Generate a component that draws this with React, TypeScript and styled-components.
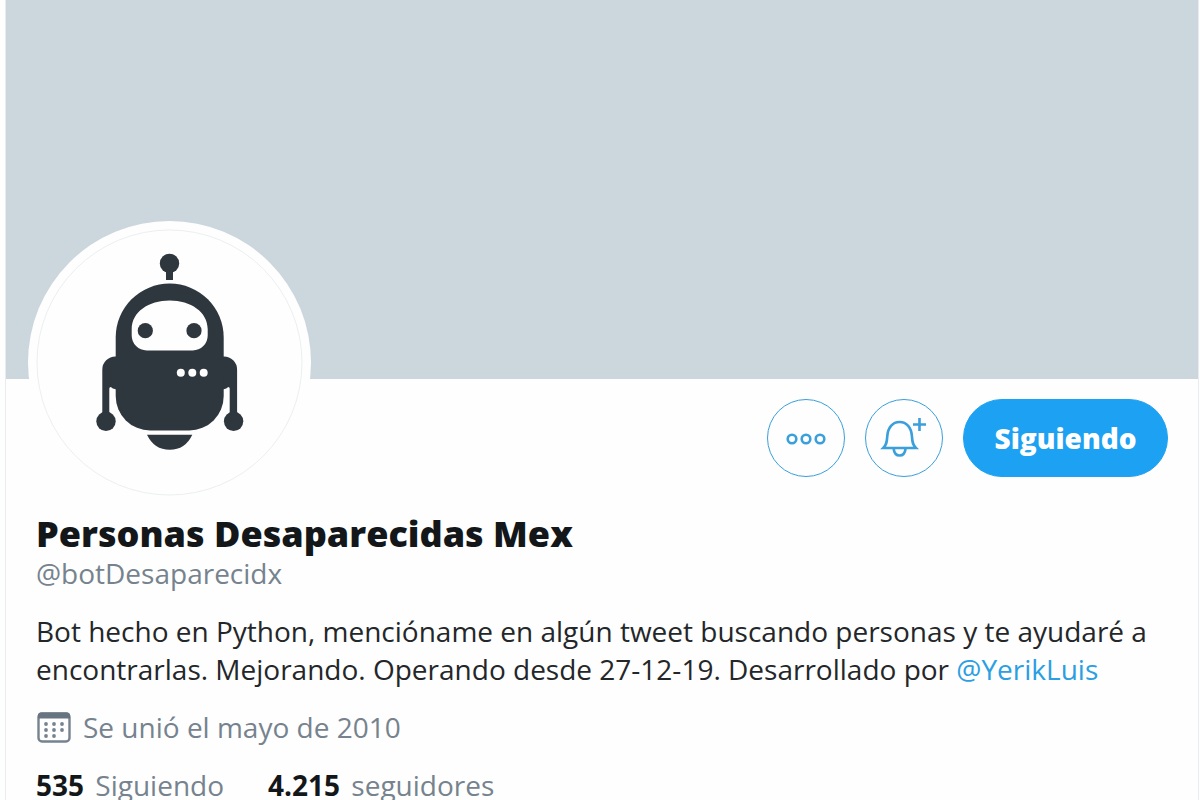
import React from "react";
import styled, { createGlobalStyle } from "styled-components";

const GlobalStyle = createGlobalStyle`
  html { scrollbar-width: none; }
  body {
    margin: 0;
    background: #fefefe;
    color: #14171a;
    font-family: "Open Sans", "Noto Sans", sans-serif;
    font-size: 28px;
    line-height: 38px;
  }
  *, *::before, *::after { box-sizing: border-box; }
`;

const Column = styled.main`
  min-height: 100vh;
  margin: 0 1px 0 5px;
  border-left: 1px solid #e6ecf0;
  border-right: 1px solid #e6ecf0;
`;

const Banner = styled.div`
  height: 379px;
  background: #ccd6dd;
`;

const Header = styled.header`
  display: flex;
  justify-content: space-between;
  align-items: flex-start;
  padding: 0 30px 0 22px;
`;

const Avatar = styled.a`
  display: block;
  width: 283px;
  height: 283px;
  margin-top: -158px;
  padding: 8px;
  border-radius: 50%;
  background: #fefefe;
`;

const Robot = styled.svg`
  display: block;
  width: 100%;
  height: 100%;
`;

const Actions = styled.div`
  display: flex;
  gap: 20px;
  padding-top: 20px;
`;

const Button = styled.button<{ $filled?: boolean }>`
  display: flex;
  align-items: center;
  justify-content: center;
  width: ${(p) => (p.$filled ? "205px" : "78px")};
  height: 78px;
  padding: 0;
  border: 1px solid ${(p) => (p.$filled ? "#1da1f2" : "#3a9fdb")};
  border-radius: 39px;
  background: ${(p) => (p.$filled ? "#1da1f2" : "transparent")};
  color: ${(p) => (p.$filled ? "#fff" : "#3a9fdb")};
  font: inherit;
  font-weight: 800;
  cursor: pointer;
`;

const ButtonIcon = styled.svg`
  width: 48px;
  height: 48px;
  fill: none;
  stroke: currentColor;
  stroke-width: 2.6;
`;

const Details = styled.section`
  padding: 11px 30px 0;
`;

const Name = styled.h1`
  margin: 0 0 1px;
  font-size: 36px;
  font-weight: 800;
  line-height: 38px;
`;

const Handle = styled.div`
  color: #76838e;
`;

const Bio = styled.p`
  margin: 20px 0;
  color: #24272a;
`;

const Mention = styled.a`
  color: #2c9fe3;
  text-decoration: none;
`;

const Joined = styled.div`
  display: flex;
  align-items: center;
  gap: 11px;
  color: #76838e;
`;

const CalendarIcon = styled.svg`
  width: 36px;
  height: 36px;
`;

const Stats = styled.nav`
  display: flex;
  gap: 44px;
  margin-top: 20px;
`;

const Stat = styled.a`
  color: #76838e;
  text-decoration: none;

  b {
    margin-right: 4px;
    color: #14171a;
  }
`;

export default function App() {
  return (
    <>
      <GlobalStyle />
      <Column>
        <Banner />
        <Header>
          <Avatar href="#foto" aria-label="Foto de perfil">
            <Robot viewBox="36 229 267 267" aria-hidden="true">
              <circle cx="169.5" cy="362.5" r="132.5" fill="#fefefe" stroke="#eceff0" />
              <g fill="#2f373e">
                <circle cx="169.5" cy="263.4" r="9.7" />
                <path d="M166 268h7v12h-7z" />
                <path d="M115.7 337.5a54 54 0 0 1 108 0V396a34.5 34.5 0 0 1-34.5 34.5h-39A34.5 34.5 0 0 1 115.7 396z" />
                <path d="M117 356.5h-1.5a13.2 13.2 0 0 0-13.2 13.2V416h7V388.5q0-1.5 1.5-1.5 1.7 2 4.9 2.3H117z" />
                <path d="M222.4 356.5h1.5a13.2 13.2 0 0 1 13.2 13.2V416h-7.4V388.5q0-1.5-1.5-1.5-1.7 2-4.5 2.3h-1.3z" />
                <circle cx="106" cy="421.3" r="9.7" />
                <circle cx="233.6" cy="421.3" r="9.7" />
                <path d="M147 434.7h45.3q-7 15-22.6 15t-22.7-15z" />
              </g>
              <path
                d="M131.7 329c0-17 17-28.5 38-28.5s38 11.5 38 28.5v6.5a15 15 0 0 1-15 15h-46a15 15 0 0 1-15-15z"
                fill="#fefefe"
              />
              <g fill="#2f373e">
                <circle cx="145.3" cy="330.7" r="7.6" />
                <circle cx="194" cy="330.7" r="7.6" />
              </g>
              <g fill="#fefefe">
                <circle cx="180.8" cy="372.7" r="4" />
                <circle cx="192.3" cy="372.7" r="4" />
                <circle cx="203.7" cy="372.7" r="4" />
              </g>
            </Robot>
          </Avatar>
          <Actions>
            <Button type="button" aria-label="Más opciones">
              <ButtonIcon viewBox="0 0 48 48">
                <circle cx="10" cy="25" r="4.3" />
                <circle cx="24" cy="25" r="4.3" />
                <circle cx="38" cy="25" r="4.3" />
              </ButtonIcon>
            </Button>
            <Button type="button" aria-label="Activar notificaciones">
              <ButtonIcon viewBox="0 0 48 48">
                <path d="M3.3 34c3-3 3.6-5.5 4-12C7.9 13.5 12.5 8 19.6 8s11.7 5.5 12.3 14c.4 6.5 1 9 4 12zM13.6 34.5c.5 4.5 2.8 7 6 7s5.5-2.5 6-7M39.5 4v13M33 10.5h13" />
              </ButtonIcon>
            </Button>
            <Button type="button" $filled>
              Siguiendo
            </Button>
          </Actions>
        </Header>
        <Details>
          <Name>Personas Desaparecidas Mex</Name>
          <Handle>@botDesaparecidx</Handle>
          <Bio>
            Bot hecho en Python, mencióname en algún tweet buscando personas y te ayudaré a
            <br />
            encontrarlas. Mejorando. Operando desde 27-12-19. Desarrollado por{" "}
            <Mention href="#YerikLuis">@YerikLuis</Mention>
          </Bio>
          <Joined>
            <CalendarIcon viewBox="0 0 36 36" aria-hidden="true">
              <rect x="2.5" y="4.5" width="31" height="28" rx="3.5" fill="none" stroke="#76838e" strokeWidth="2.4" />
              <path d="M2 9.5V6.5q0-3 3-3h26q3 0 3 3v3z" fill="#687580" />
              <g fill="#76838e">
                <circle cx="10" cy="15" r="1.9" />
                <circle cx="18" cy="15" r="1.9" />
                <circle cx="26" cy="15" r="1.9" />
                <circle cx="10" cy="21" r="1.9" />
                <circle cx="18" cy="21" r="1.9" />
                <circle cx="26" cy="21" r="1.9" />
                <circle cx="10" cy="27" r="1.9" />
                <circle cx="18" cy="27" r="1.9" />
              </g>
            </CalendarIcon>
            Se unió el mayo de 2010
          </Joined>
          <Stats>
            <Stat href="#siguiendo">
              <b>535</b> Siguiendo
            </Stat>
            <Stat href="#seguidores">
              <b>4.215</b> seguidores
            </Stat>
          </Stats>
        </Details>
      </Column>
    </>
  );
}
